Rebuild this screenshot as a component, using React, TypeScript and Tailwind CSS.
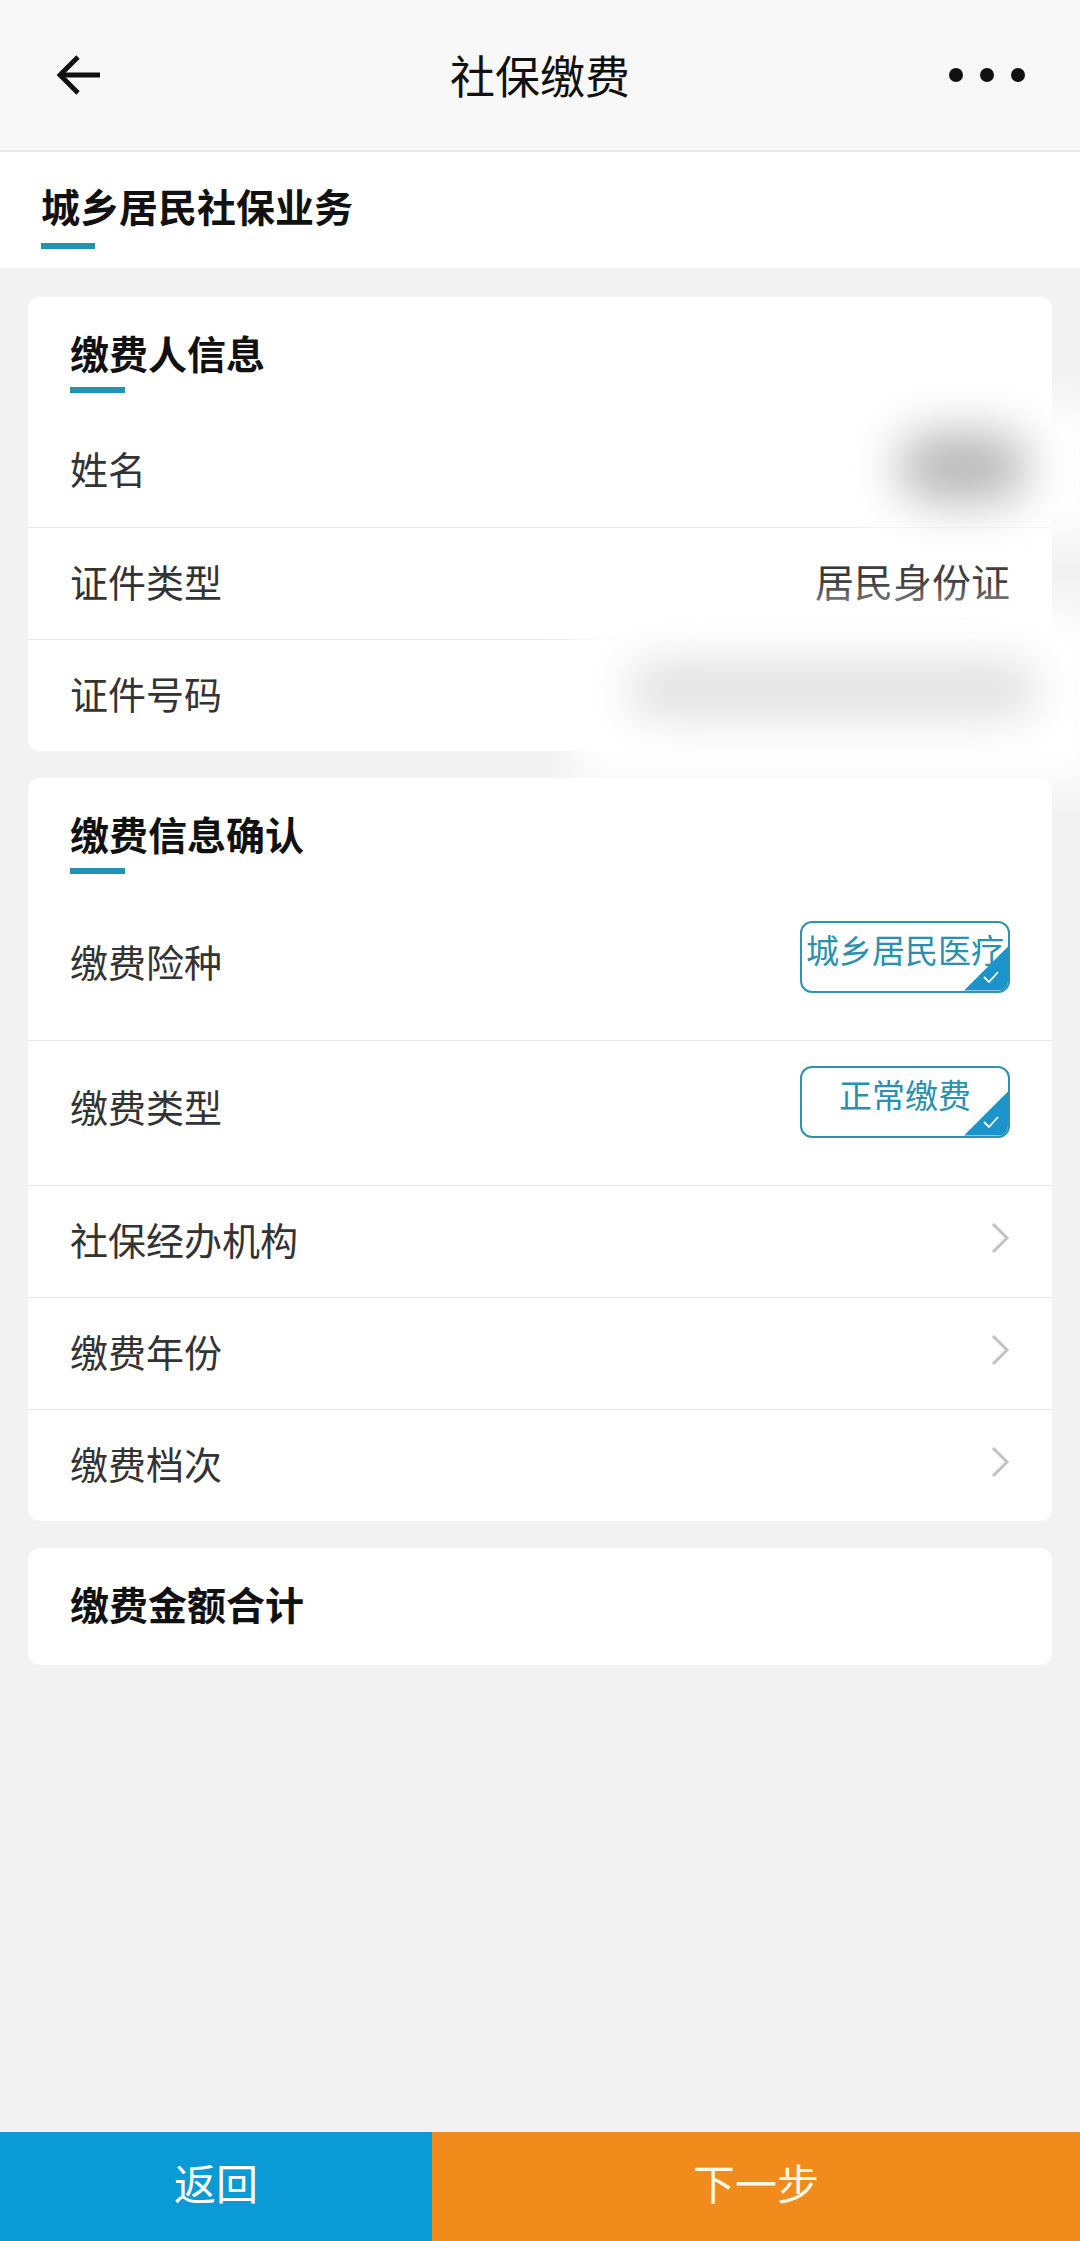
import React from 'react';

const FONT = "font-['Noto_Sans_CJK_SC','Noto_Sans',sans-serif]";

function BackArrow() {
  return (
    <svg width="46" height="42" viewBox="0 0 46 42" fill="none">
      <path d="M45 21H5" stroke="#111" strokeWidth="4.8" />
      <path d="M23 3L5 21l18 18" stroke="#111" strokeWidth="4.8" />
    </svg>
  );
}

function Chevron() {
  return (
    <svg width="20" height="32" viewBox="0 0 20 32" fill="none">
      <path d="M3 2l14 14L3 30" stroke="#c2c2c2" strokeWidth="3" />
    </svg>
  );
}

function SectionTitle({ text, line = true }: { text: string; line?: boolean }) {
  return (
    <div className="px-[42px] pt-[36px]">
      <div className="text-[39px] leading-[38px] h-[38px] font-bold text-[#111] whitespace-nowrap">{text}</div>
      {line && <div className="mt-[16px] w-[55px] h-[6px] bg-[#2393b4]" />}
    </div>
  );
}

function Row({ label, children, first }: { label: string; children?: React.ReactNode; first?: boolean }) {
  return (
    <div className={`h-[112px] flex items-center justify-between px-[42px] pb-[7px] ${first ? '' : 'border-t border-[#e6e6e6]'}`}>
      <span className="text-[38px] text-[#333]">{label}</span>
      {children}
    </div>
  );
}

function Tag({ text }: { text: string }) {
  return (
    <div className="relative w-[210px] h-[72px] mb-[8px] border-2 border-[#2d93ae] rounded-[12px] overflow-hidden flex items-center justify-center pb-[14px]">
      <span className="text-[33px] leading-none text-[#2a90ad] whitespace-nowrap">{text}</span>
      <div className="absolute right-0 bottom-0 w-[44px] h-[44px] bg-[#1b94cb] [clip-path:polygon(100%_0,100%_100%,0_100%)]" />
      <svg className="absolute right-[8px] bottom-[7px]" width="18" height="14" viewBox="0 0 18 14" fill="none">
        <path d="M2 7l5 5 9-10" stroke="#fff" strokeWidth="1.8" />
      </svg>
    </div>
  );
}

function TagRow({ label, tag, first, h }: { label: string; tag: string; first?: boolean; h: string }) {
  return (
    <div className={`${h} flex items-center justify-between px-[42px] pb-[15px] ${first ? '' : 'border-t border-[#e6e6e6]'}`}>
      <span className="text-[38px] text-[#333]">{label}</span>
      <Tag text={tag} />
    </div>
  );
}

export default function App() {
  return (
    <div className={`w-[1080px] h-[2241px] bg-[#f2f2f2] flex flex-col overflow-hidden ${FONT}`}>
      {/* top bar */}
      <div className="h-[152px] shrink-0 bg-[#f8f8f8] border-b-2 border-[#e8e8e8] grid grid-cols-[1fr_auto_1fr] items-center">
        <div className="pl-[55px] flex items-center">
          <BackArrow />
        </div>
        <div className="text-[45px] text-[#111]">社保缴费</div>
        <div className="pr-[55px] flex justify-end gap-[17px]">
          <span className="w-[14px] h-[14px] rounded-full bg-[#111]" />
          <span className="w-[14px] h-[14px] rounded-full bg-[#111]" />
          <span className="w-[14px] h-[14px] rounded-full bg-[#111]" />
        </div>
      </div>

      {/* tab */}
      <div className="h-[116px] shrink-0 bg-white px-[41px] pt-[34px]">
        <div className="text-[39px] leading-[39px] font-bold text-[#111]">城乡居民社保业务</div>
        <div className="mt-[18px] w-[54px] h-[6px] bg-[#2393b4]" />
      </div>

      <div className="flex-1 px-[28px] pt-[29px] flex flex-col gap-[27px]">
        {/* payer info */}
        <div className="relative bg-white rounded-[12px]">
          <div className="h-[118px]">
            <SectionTitle text="缴费人信息" />
          </div>
          <Row label="姓名" first />
          <Row label="证件类型">
            <span className="text-[39px] text-[#333]">居民身份证</span>
          </Row>
          <Row label="证件号码" />
          {/* privacy blur */}
          <div className="absolute left-[832px] top-[105px] w-[240px] h-[135px] bg-white blur-[20px]" />
          <div className="absolute left-[870px] top-[135px] w-[130px] h-[70px] rounded-full bg-[#b8b8b8] blur-[24px]" />
          <div className="absolute left-[545px] top-[312px] w-[530px] h-[175px] bg-white blur-[20px]" />
          <div className="absolute left-[600px] top-[362px] w-[410px] h-[60px] rounded-full bg-[#e2e2e2] blur-[22px]" />
        </div>

        {/* payment info */}
        <div className="bg-white rounded-[12px]">
          <div className="h-[118px]">
            <SectionTitle text="缴费信息确认" />
          </div>
          <TagRow label="缴费险种" tag="城乡居民医疗" first h="h-[144px]" />
          <TagRow label="缴费类型" tag="正常缴费" h="h-[145px]" />
          <Row label="社保经办机构"><Chevron /></Row>
          <Row label="缴费年份"><Chevron /></Row>
          <Row label="缴费档次"><Chevron /></Row>
        </div>

        {/* total */}
        <div className="bg-white rounded-[12px] h-[117px]">
          <SectionTitle text="缴费金额合计" line={false} />
        </div>
      </div>

      {/* bottom buttons */}
      <div className="h-[109px] shrink-0 flex">
        <button className="w-[432px] bg-[#0a9ad5] text-white text-[42px] pb-[10px]">返回</button>
        <button className="flex-1 bg-[#f08b1c] text-[#fff8e6] text-[42px] pb-[10px]">下一步</button>
      </div>
    </div>
  );
}
